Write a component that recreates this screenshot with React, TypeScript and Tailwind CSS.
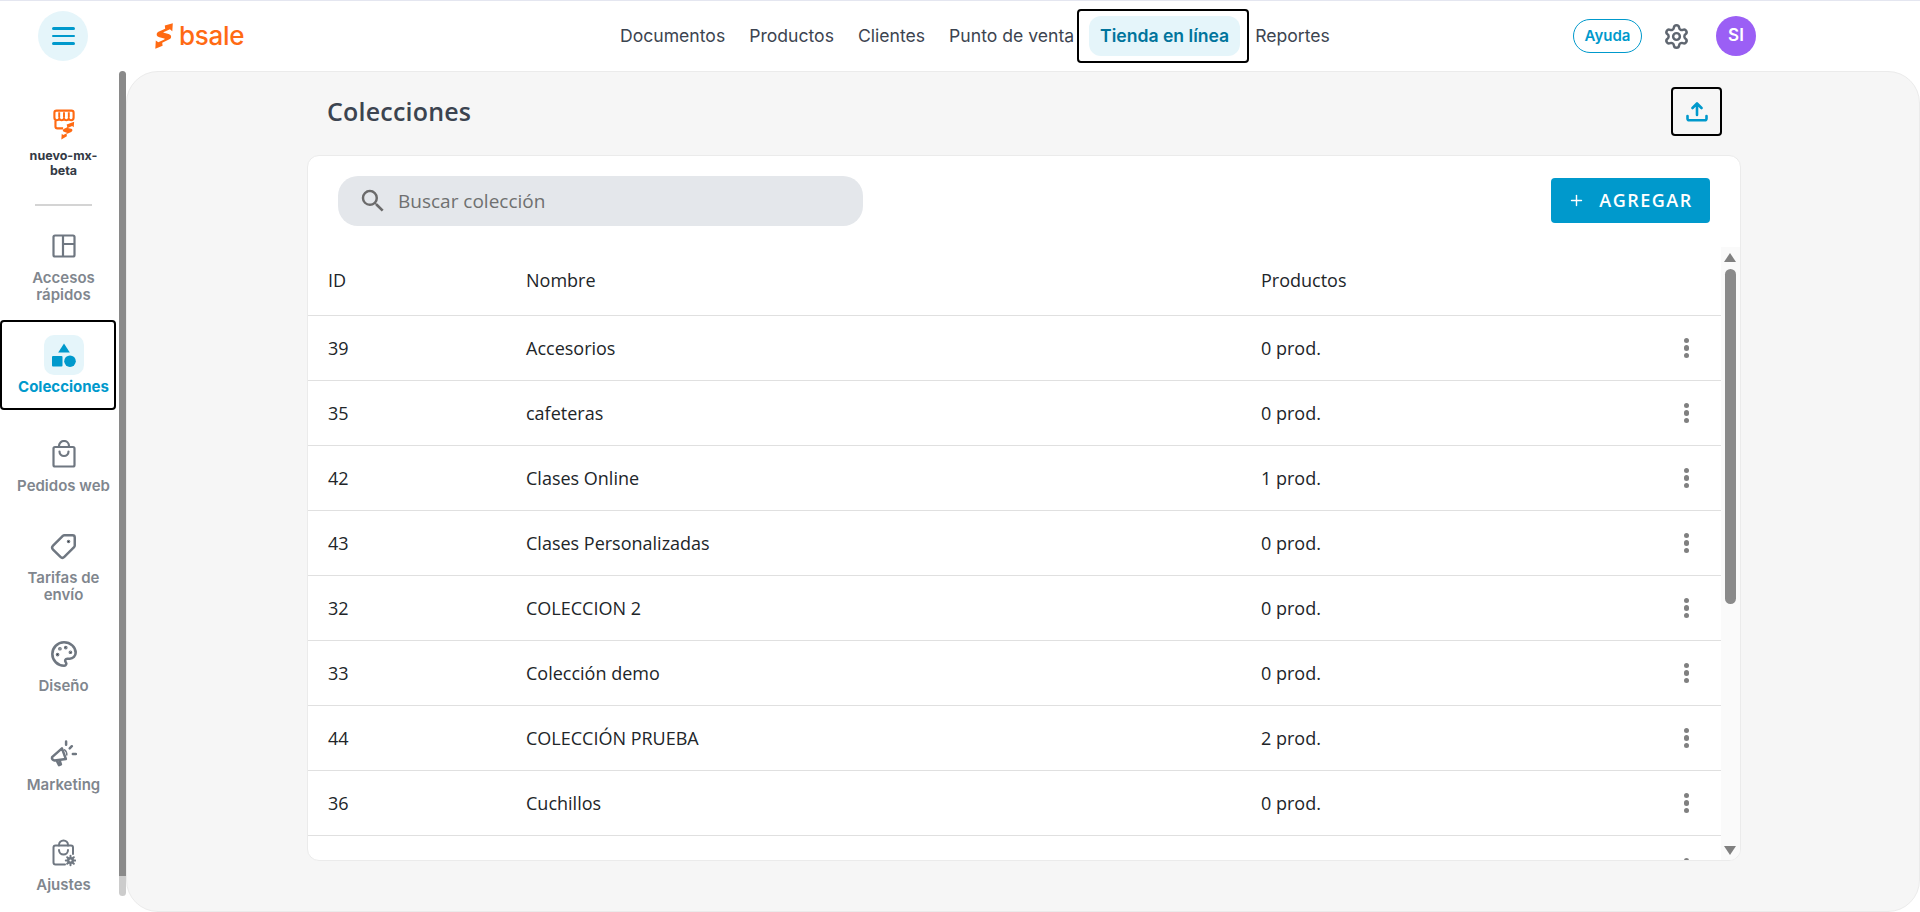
import { Palette, Plus, Settings, Tag } from "lucide-react";
import { MdSearch } from "react-icons/md";
import type { ReactNode } from "react";

const NAV_LINKS = ["Documentos", "Productos", "Clientes", "Punto de venta"];

const ROWS = [
  { id: "39", name: "Accesorios", products: "0 prod." },
  { id: "35", name: "cafeteras", products: "0 prod." },
  { id: "42", name: "Clases Online", products: "1 prod." },
  { id: "43", name: "Clases Personalizadas", products: "0 prod." },
  { id: "32", name: "COLECCION 2", products: "0 prod." },
  { id: "33", name: "Colección demo", products: "0 prod." },
  { id: "44", name: "COLECCIÓN PRUEBA", products: "2 prod." },
  { id: "36", name: "Cuchillos", products: "0 prod." },
  { id: "", name: "", products: "" },
];

function BsaleMark({ className = "" }: { className?: string }) {
  return (
    <svg viewBox="0 0 18 26" className={className} fill="#ff6a13">
      <path d="M9.800 2.600 17.800.2l-.5 8-2.400-1.900-6 2.600c-.6.300-.6.600 0 .8l4.600 1.300c1.600.500 2.600 1.300 2.600 2.700 0 1.300-.8 2.200-2.200 2.800l-6.700 3.200.4 3-7.300 3L.8 17.400l2.500 1.800 6-2.800c.6-.3.6-.6 0-.8l-4.900-1.400C2.700 13.700 1.700 12.800 1.700 11.400c0-1.300.8-2.200 2.300-2.900l6.200-2.700z" />
    </svg>
  );
}

function StoreIcon() {
  return (
    <svg viewBox="0 0 24 30" className="h-[32px] w-[26px]">
      <path d="M3 8V3.500C3 2.400 3.900 1.500 5 1.500h14c1.100 0 2 .9 2 2V8c0 1.400-1 2.500-2.300 2.500-1 0-1.900-.6-2.300-1.400-.4.8-1.300 1.400-2.200 1.400s-1.800-.6-2.200-1.400c-.4.8-1.300 1.400-2.200 1.400s-1.800-.6-2.200-1.400c-.4.8-1.300 1.400-2.300 1.400C4 10.500 3 9.400 3 8z" fill="none" stroke="#ff6a13" strokeWidth="2" />
      <path d="M7.500 3v5M12 3v5M16.500 3v5" stroke="#ff6a13" strokeWidth="1.800" />
      <path d="M4 11v5.500c0 1 .6 1.700 1.700 1.700h5.500" fill="none" stroke="#ff6a13" strokeWidth="2" />
      <path d="M14.500 14.500 21.500 12l-.4 5-1.500-1-4 1.700 3.200.9c1.500.5 1.500 2.200 0 2.900l-4.300 2 .2 2-5.200 3 .4-5.200 1.300 1 4-1.900-3.200-1c-1.500-.5-1.500-2.200.1-2.900l3-1.300z" fill="#ff6a13" />
    </svg>
  );
}

function PanelsIcon() {
  return (
    <svg viewBox="0 0 24 24" className="h-6 w-6" fill="none" stroke="#6f7781" strokeWidth="2.200">
      <rect x="1.500" y="1.500" width="21" height="21" rx="1.500" />
      <path d="M11 1.500v21M11 10h11.500" />
    </svg>
  );
}

function ShapesIcon() {
  return (
    <svg viewBox="0 0 24 24" className="h-6 w-6" fill="#0099cc">
      <path d="M12 .5 17.800 9.500H6.200z" />
      <rect x="0" y="13" width="10.500" height="10.500" rx="1" />
      <circle cx="18" cy="18.200" r="5.800" />
    </svg>
  );
}

function BagIcon() {
  return (
    <svg viewBox="0 0 24 28" className="h-7 w-6" fill="none" stroke="#6f7781" strokeWidth="2.200" strokeLinecap="round">
      <rect x="1.500" y="7" width="21" height="19.500" rx="1.500" />
      <path d="M7 7V6a5 5 0 0 1 10 0v1M7.500 11.500a4.500 4.500 0 0 0 9 0" />
    </svg>
  );
}

function MegaphoneIcon() {
  return (
    <svg viewBox="0 0 26 26" className="h-[27px] w-[27px]" fill="none" stroke="#6f7781" strokeWidth="2.400" strokeLinecap="round" strokeLinejoin="round">
      <path d="M2 16.500 11.500 8l3.800 10.300-11 1.400c-1.800-.5-2.800-1.800-2.300-3.200z" />
      <path d="M6.500 20l2.200 4.300 1.800-.8-1.300-4" />
      <path d="M14 9.500c1.500 1 2.300 3 2.200 5" strokeWidth="1.400" />
      <path d="M15.500 1.500v3M21 6l-2 2M25 13.500h-3" />
    </svg>
  );
}

function BagGearIcon() {
  return (
    <svg viewBox="0 0 24 28" className="h-7 w-6" fill="none" stroke="#6f7781" strokeWidth="2" strokeLinecap="round">
      <path d="M13 25.500H3.500c-1 0-2-.9-2-2V8.500c0-1 1-2 2-2h15.500c1 0 2 1 2 2V15" />
      <path d="M7 6.500V6a4.500 4.500 0 0 1 9 0v.5M7 11a4.500 4.500 0 0 0 9 0" />
      <circle cx="18.500" cy="21.500" r="2.300" strokeWidth="2.400" />
      <path d="M18.500 16.800v1.200M18.500 25v1.200M13.800 21.500H15M22 21.500h1.200M15.200 18.200l.8.8M21 24l.8.8M15.200 24.800l.8-.8M21 19l.8-.8" />
    </svg>
  );
}

function SideItem({ icon, label, className = "" }: { icon: ReactNode; label: ReactNode; className?: string }) {
  return (
    <div className={`flex flex-col items-center text-center ${className}`}>
      <div className="flex h-10 w-10 items-center justify-center">{icon}</div>
      <span className="mt-[3px] whitespace-nowrap text-[15px] leading-[17px] font-semibold text-[#80868e]">{label}</span>
    </div>
  );
}

function Scrollbar() {
  return (
    <div className="flex h-full w-[7px] flex-col">
      <div className="h-[805px] rounded-t-full bg-[#8a8a8a]" />
      <div className="h-5 rounded-b-full bg-[#cccccc]" />
    </div>
  );
}

function Sidebar() {
  return (
    <aside className="flex w-[126px] flex-shrink-0">
      <nav className="w-[119px] pt-[34px] pl-2">
        <div className="flex flex-col items-center text-center">
          <div className="flex h-10 w-10 items-center justify-center">
            <StoreIcon />
          </div>
          <span className="mt-[3px] w-[80px] text-[12.500px] leading-[15px] font-bold text-[#333a45]">nuevo-mx-beta</span>
        </div>
        <div className="mx-auto mt-[26px] h-[2px] w-[57px] bg-[#d4d4d4]" />
        <SideItem className="mt-5" icon={<PanelsIcon />} label={<>Accesos<br />rápidos</>} />

        {/* Active item carries a focus ring in the capture */}
        <div className="mt-[17px] -ml-2 flex h-[90px] w-[116px] flex-col items-center rounded-[4px] pt-[15px] pl-[11px] text-center outline-2 -outline-offset-2 outline-black">
          <div className="flex h-10 w-10 items-center justify-center rounded-[10px] bg-[#e5f5fa]">
            <ShapesIcon />
          </div>
          <span className="mt-[3px] whitespace-nowrap text-[15px] leading-[17px] font-bold text-[#0099cc]">Colecciones</span>
        </div>

        <SideItem className="mt-6" icon={<BagIcon />} label="Pedidos web" />
        <SideItem className="mt-8" icon={<Tag size={27} strokeWidth={2.2} color="#6f7781" className="-scale-x-100" />} label={<>Tarifas de<br />envío</>} />
        <SideItem className="mt-[31px]" icon={<Palette size={28} strokeWidth={2.2} color="#6f7781" />} label="Diseño" />
        <SideItem className="mt-[39px]" icon={<MegaphoneIcon />} label="Marketing" />
        <SideItem className="mt-10" icon={<BagGearIcon />} label="Ajustes" />
      </nav>
      <Scrollbar />
    </aside>
  );
}

function Header() {
  return (
    <header className="flex h-[71px] flex-shrink-0 items-center border-t-[1px] border-[#e4e6f0] font-['Inter',sans-serif]">
      <div className="flex w-[126px] justify-center">
        <button className="flex h-[50px] w-[50px] flex-col items-center justify-center gap-[5px] rounded-full bg-[#e5f5fa]">
          <span className="h-[2.500px] w-[23px] rounded-full bg-[#0099cc]" />
          <span className="h-[2.500px] w-[23px] rounded-full bg-[#0099cc]" />
          <span className="h-[2.500px] w-[23px] rounded-full bg-[#0099cc]" />
        </button>
      </div>
      <div className="ml-[29px] flex w-[453px] items-center gap-[6px]">
        <BsaleMark className="h-[26px] w-[18px]" />
        <span className="text-[26px] leading-none font-medium tracking-[-0.3px] text-[#ff6a13]">bsale</span>
      </div>
      <nav className="flex items-center text-[17.600px] text-[#3c4450]">
        {NAV_LINKS.map((link) => (
          <a key={link} className="px-3">
            {link}
          </a>
        ))}
        <div className="-ml-[9px] flex h-[54px] w-[172px] items-center rounded-[4px] pl-[12px] outline-2 -outline-offset-2 outline-black">
          <a className="flex h-10 w-[151px] items-center justify-center rounded-[12px] bg-[#e5f5fa] font-semibold text-[#00749c]">
            Tienda en línea
          </a>
        </div>
        <a className="pl-[6px]">Reportes</a>
      </nav>
      <div className="ml-auto mr-[164px] flex items-center">
        <button className="flex h-[34px] w-[69px] items-center justify-center rounded-full border border-[#0099cc] text-[15px] font-semibold text-[#0099cc]">
          Ayuda
        </button>
        <Settings size={27} strokeWidth={2.2} color="#5f6670" className="ml-[21px]" />
        <div className="ml-[26px] flex h-10 w-10 items-center justify-center rounded-full bg-[#9b5ff5] text-[17px] font-semibold text-white">
          SI
        </div>
      </div>
    </header>
  );
}

function Kebab() {
  return (
    <div className="flex flex-col gap-[2px]">
      <span className="h-[5.500px] w-[5.500px] rounded-full bg-[#808080]" />
      <span className="h-[5.500px] w-[5.500px] rounded-full bg-[#808080]" />
      <span className="h-[5.500px] w-[5.500px] rounded-full bg-[#808080]" />
    </div>
  );
}

function TableScrollbar() {
  return (
    <div className="flex w-[19px] flex-shrink-0 flex-col items-center bg-[#fafafa] pr-[1px]">
      <div className="mt-[6px] h-0 w-0 border-x-[6.500px] border-b-[9px] border-x-transparent border-b-[#808080]" />
      <div className="mt-[7px] h-[335px] w-[11px] rounded-full bg-[#8a8a8a]" />
      <div className="mt-auto mb-[5px] h-0 w-0 border-x-[6.500px] border-t-[9px] border-x-transparent border-t-[#808080]" />
    </div>
  );
}

function CollectionsTable() {
  return (
    <div className="flex min-h-0 flex-1">
      <div className="min-w-0 flex-1 overflow-hidden text-[18px] text-[#212529]">
        <div className="flex h-[69px] items-center border-b border-[#e0e0e0] pb-[2px] pl-5">
          <span className="w-[198px]">ID</span>
          <span className="w-[735px]">Nombre</span>
          <span>Productos</span>
        </div>
        {ROWS.map((row, i) => (
          <div key={i} className="flex h-[65px] items-center border-b border-[#e0e0e0] pl-5">
            <span className="w-[198px]">{row.id}</span>
            <span className="w-[735px]">{row.name}</span>
            <span>{row.products}</span>
            <div className="ml-auto mr-[32px]">
              <Kebab />
            </div>
          </div>
        ))}
      </div>
      <TableScrollbar />
    </div>
  );
}

export default function App() {
  return (
    <div className="flex h-[912px] flex-col overflow-hidden bg-white font-['Open_Sans',sans-serif]">
      <Header />
      <div className="flex min-h-0 flex-1 font-['Inter',sans-serif]">
        <Sidebar />
        <main className="flex-1 rounded-[32px] border border-[#ebebeb] bg-[#f6f6f6] pr-[178px] pl-[180px] font-['Open_Sans',sans-serif]">
          <div className="flex h-[83px] items-center justify-between pb-[4px] pl-5">
            <h1 className="text-[25px] font-semibold tracking-[0.2px] text-[#3c4450]">Colecciones</h1>
            <button className="mr-[19px] flex h-[49px] w-[51px] items-center justify-center rounded-[4px] outline-2 -outline-offset-2 outline-black">
              <svg viewBox="0 0 22 20" className="h-5 w-[22px]" fill="none" stroke="#0099cc" strokeWidth="2.600" strokeLinecap="round" strokeLinejoin="round">
                <path d="M11 13V2M6.500 6 11 1.500 15.500 6M1.500 14v2.500c0 1 .7 1.800 1.800 1.800h15.400c1.100 0 1.800-.8 1.800-1.800V14" />
              </svg>
            </button>
          </div>
          <section className="flex h-[706px] flex-col overflow-hidden rounded-[12px] border border-[#ebebeb] bg-white">
            <div className="flex h-[91px] flex-shrink-0 items-center justify-between pr-[30px] pl-[30px]">
              <div className="mb-[1px] flex h-[50px] w-[525px] items-center gap-[10px] rounded-[20px] bg-[#e4e7eb] pl-[20px]">
                <MdSearch size={30} color="#6b6b6b" />
                <span className="text-[19px] text-[#6f7070]">Buscar colección</span>
              </div>
              <button className="mb-[2px] flex h-[45px] w-[159px] items-center justify-center gap-[14px] rounded-[4px] bg-[#0099cc] text-[18px] font-semibold tracking-[1.500px] text-white">
                <Plus size={17} strokeWidth={2} />
                AGREGAR
              </button>
            </div>
            <CollectionsTable />
          </section>
        </main>
      </div>
    </div>
  );
}
